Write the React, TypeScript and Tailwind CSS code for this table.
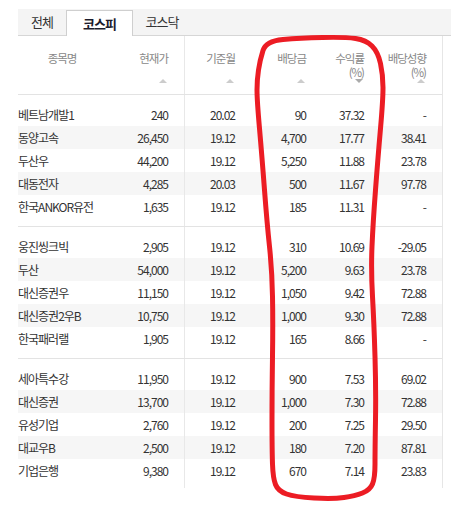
import React from 'react';

type Row = [string, string, string, string, string, string];

const groups: Row[][] = [
  [
    ['베트남개발1', '240', '20.02', '90', '37.32', '-'],
    ['동양고속', '26,450', '19.12', '4,700', '17.77', '38.41'],
    ['두산우', '44,200', '19.12', '5,250', '11.88', '23.78'],
    ['대동전자', '4,285', '20.03', '500', '11.67', '97.78'],
    ['한국ANKOR유전', '1,635', '19.12', '185', '11.31', '-'],
  ],
  [
    ['웅진씽크빅', '2,905', '19.12', '310', '10.69', '-29.05'],
    ['두산', '54,000', '19.12', '5,200', '9.63', '23.78'],
    ['대신증권우', '11,150', '19.12', '1,050', '9.42', '72.88'],
    ['대신증권2우B', '10,750', '19.12', '1,000', '9.30', '72.88'],
    ['한국패러랠', '1,905', '19.12', '165', '8.66', '-'],
  ],
  [
    ['세아특수강', '11,950', '19.12', '900', '7.53', '69.02'],
    ['대신증권', '13,700', '19.12', '1,000', '7.30', '72.88'],
    ['유성기업', '2,760', '19.12', '200', '7.25', '29.50'],
    ['대교우B', '2,500', '19.12', '180', '7.20', '87.81'],
    ['기업은행', '9,380', '19.12', '670', '7.14', '23.83'],
  ],
];

const cols = 'grid grid-cols-[88px_79px_66px_71px_58px_62px]';

// hand-drawn red marker loop around 배당금 / 수익률
const loop: [number, number][] = [
  [266, 41], [300, 38], [345, 37], [366, 40], [378, 52], [383, 75], [383, 100],
  [378, 157], [373, 223], [371, 270], [374, 323], [376, 390], [375, 450], [375, 478],
  [370, 490], [355, 496], [333, 499], [295, 497], [278, 491], [273, 478], [272, 450],
  [272, 390], [273, 323], [272, 270], [267, 223], [262, 157], [257, 100], [257, 80], [260, 60],
];

function loopPath(pts: [number, number][]) {
  const mid = (a: [number, number], b: [number, number]) => [(a[0] + b[0]) / 2, (a[1] + b[1]) / 2];
  const n = pts.length;
  const start = mid(pts[n - 1], pts[0]);
  let d = `M${start[0]} ${start[1]}`;
  for (let i = 0; i < n; i++) {
    const m = mid(pts[i], pts[(i + 1) % n]);
    d += ` Q${pts[i][0]} ${pts[i][1]} ${m[0]} ${m[1]}`;
  }
  return d + 'Z';
}

function Arrow({ down }: { down?: boolean }) {
  return down ? (
    <span className="mr-[1px] block h-0 w-0 border-x-[4px] border-t-[4px] border-x-transparent border-t-[#aaa]" />
  ) : (
    <span className="mr-[1px] block h-0 w-0 border-x-[4px] border-b-[4px] border-x-transparent border-b-[#ccc]" />
  );
}

function HeadCell({ label, sub, down, line }: { label: string; sub?: string; down?: boolean; line?: boolean }) {
  return (
    <div className={`flex flex-col items-end pr-4 pt-[15px] ${line ? 'border-r border-[#e8e8e8]' : ''}`}>
      <div className="flex h-[28px] flex-col items-end leading-[14px]">
        <span>{label}</span>
        {sub && <span>{sub}</span>}
      </div>
      <Arrow down={down} />
    </div>
  );
}

export default function App() {
  return (
    <div className="relative h-[517px] w-[451px] bg-white pl-[18px] pt-[9px] font-['Noto_Sans_CJK_KR',sans-serif] text-[#333]">
      <div className="flex h-[27px] items-end border-b border-[#d6d6d6] bg-[#f4f4f4] text-[13px] tracking-[-1px]">
        <div className="flex h-[26px] w-[48px] items-center justify-center text-[#333]">전체</div>
        <div className="-mb-px flex h-[26px] w-[67px] items-center justify-center border-x border-t border-[#cfcfcf] bg-white font-bold text-[#1c1c2c]">
          코스피
        </div>
        <div className="flex h-[26px] w-[58px] items-center justify-center text-[#333]">코스닥</div>
      </div>

      <div className="w-[425px] border-r border-[#e6e6e6] bg-[linear-gradient(to_right,transparent_166px,#e8e8e8_166px,#e8e8e8_167px,transparent_167px)]">
        <div className={`${cols} h-[59px] border-b border-[#e3e3e3] bg-white text-[11.5px] tracking-[-1px] text-[#888]`}>
          <div className="flex justify-center pt-[15px] leading-[14px]">종목명</div>
          <HeadCell label="현재가" line />
          <HeadCell label="기준월" />
          <HeadCell label="배당금" />
          <HeadCell label="수익률" sub="(%)" down />
          <HeadCell label="배당성향" sub="(%)" />
        </div>

        {groups.map((rows, g) => (
          <div
            key={g}
            className={`${g > 0 ? 'border-t border-[#e3e3e3] pt-[8px]' : 'pt-2'} ${g === 2 ? 'pb-[6px]' : 'pb-2'}`}
          >
            {rows.map((r, i) => (
              <div
                key={r[0]}
                className={`${cols} h-[23px] items-center text-[12px] tracking-[-1px] ${i % 2 === 1 ? 'bg-[#f6f6f6]' : ''}`}
              >
                <div className="whitespace-nowrap">{r[0]}</div>
                <div className="flex h-full items-center justify-end border-r border-[#e8e8e8] pr-4">{r[1]}</div>
                <div className="pr-4 text-right">{r[2]}</div>
                <div className="pr-4 text-right">{r[3]}</div>
                <div className="pr-4 text-right">{r[4]}</div>
                <div className="pr-4 text-right">{r[5]}</div>
              </div>
            ))}
          </div>
        ))}
      </div>

      <svg className="pointer-events-none absolute left-0 top-0" width="451" height="517" viewBox="0 0 451 517">
        <path d={loopPath(loop)} fill="none" stroke="#ec1c24" strokeWidth="5" strokeLinejoin="round" />
      </svg>
    </div>
  );
}
